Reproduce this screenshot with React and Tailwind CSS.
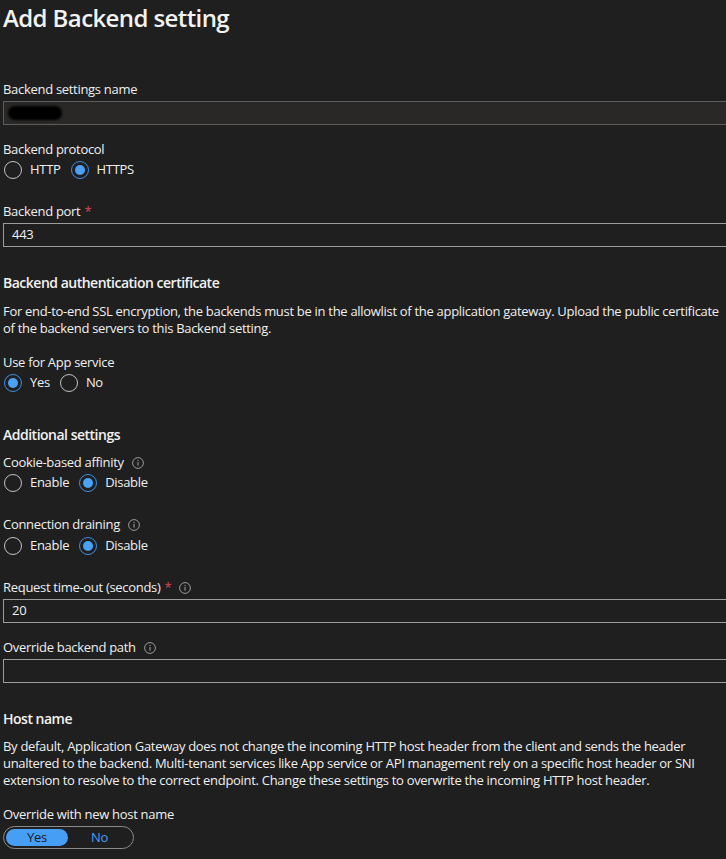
import React from "react";

const font = { fontFamily: '"Segoe UI", "Open Sans", "Noto Sans", sans-serif' };

function Info() {
  return (
    <svg width="12" height="12" viewBox="0 0 12 12" className="ml-[8px] shrink-0">
      <circle cx="6" cy="6" r="5.4" fill="none" stroke="#9a9a9a" strokeWidth="1" />
      <circle cx="6" cy="3.6" r="0.7" fill="#9a9a9a" />
      <rect x="5.45" y="5" width="1.1" height="3.6" fill="#9a9a9a" />
    </svg>
  );
}

function Label({ children, required, info, className = "" }) {
  return (
    <div className={`flex items-center h-[20px] pt-[2px] text-[13px] tracking-[-0.3px] text-[#f0f0f0] ${className}`}>
      <span>{children}</span>
      {required && <span className="ml-[4px] text-[#e0425a]">*</span>}
      {info && <Info />}
    </div>
  );
}

function Radio({ checked, label }) {
  return (
    <div className="flex items-center h-[20px]">
      <span
        className={`flex items-center justify-center w-[18px] h-[18px] rounded-full border ${
          checked ? "border-[#3f8fe0]" : "border-[#c2c2c2]"
        }`}
      >
        {checked && <span className="w-[10px] h-[10px] rounded-full bg-[#4aa2f5]" />}
      </span>
      <span className="ml-[8px] text-[13px] tracking-[-0.3px] text-[#f0f0f0]">{label}</span>
    </div>
  );
}

function RadioRow({ items, className = "" }) {
  return (
    <div className={`flex items-center gap-[10px] pl-[1px] ${className}`}>
      {items.map((it) => (
        <Radio key={it.label} {...it} />
      ))}
    </div>
  );
}

function Input({ value, dim, className = "", children }) {
  return (
    <div
      className={`relative h-[24px] w-[760px] border flex items-center pl-[8px] text-[13px] tracking-[-0.3px] text-[#f0f0f0] ${
        dim ? "border-[#5c5c5c] bg-[#292826]" : "border-[#9c9c9c] bg-[#1f1f1f]"
      } ${className}`}
    >
      {value}
      {children}
    </div>
  );
}

function Heading({ children, className = "" }) {
  return (
    <div className={`h-[20px] flex items-center text-[14px] font-semibold tracking-[-0.5px] text-[#f2f2f2] ${className}`}>
      {children}
    </div>
  );
}

export default function App() {
  return (
    <div className="w-full min-h-[859px] bg-[#1f1f1f] overflow-hidden pl-[3px] text-[#f0f0f0]" style={font}>
      <h1 className="text-[24px] font-semibold leading-[36px] h-[36px] tracking-[-0.6px] text-[#f2f2f2]">Add Backend setting</h1>

      <Label className="mt-[43px]">Backend settings name</Label>
      <Input dim className="mt-[2px]">
        <span className="absolute left-[4px] top-[4px] w-[54px] h-[14px] rounded-full bg-black blur-[1px]" />
      </Input>

      <Label className="mt-[14px]">Backend protocol</Label>
      <RadioRow
        className="mt-[1px]"
        items={[
          { label: "HTTP", checked: false },
          { label: "HTTPS", checked: true },
        ]}
      />

      <Label required className="mt-[21px]">Backend port</Label>
      <Input value="443" className="mt-[2px]" />

      <Heading className="mt-[25px]">Backend authentication certificate</Heading>
      <p className="mt-[11px] text-[13px] tracking-[-0.3px] leading-[16.5px] w-[760px] whitespace-nowrap">
        For end-to-end SSL encryption, the backends must be in the allowlist of the application gateway. Upload the public certificate
        <br />
        of the backend servers to this Backend setting.
      </p>

      <Label className="mt-[16px]">Use for App service</Label>
      <RadioRow
        className="mt-[1px]"
        items={[
          { label: "Yes", checked: true },
          { label: "No", checked: false },
        ]}
      />

      <Heading className="mt-[31px]">Additional settings</Heading>
      <Label info className="mt-[8px]">Cookie-based affinity</Label>
      <RadioRow
        className="mt-[1px]"
        items={[
          { label: "Enable", checked: false },
          { label: "Disable", checked: true },
        ]}
      />

      <Label info className="mt-[21px]">Connection draining</Label>
      <RadioRow
        className="mt-[2px]"
        items={[
          { label: "Enable", checked: false },
          { label: "Disable", checked: true },
        ]}
      />

      <Label required info className="mt-[21px]">Request time-out (seconds)</Label>
      <Input value="20" className="mt-[2px]" />

      <Label info className="mt-[14px]">Override backend path</Label>
      <Input className="mt-[2px]" />

      <Heading className="mt-[25px]">Host name</Heading>
      <p className="mt-[10px] text-[13px] tracking-[-0.3px] leading-[17px] whitespace-nowrap">
        By default, Application Gateway does not change the incoming HTTP host header from the client and sends the header
        <br />
        unaltered to the backend. Multi-tenant services like App service or API management rely on a specific host header or SNI
        <br />
        extension to resolve to the correct endpoint. Change these settings to overwrite the incoming HTTP host header.
      </p>

      <Label className="mt-[15px]">Override with new host name</Label>
      <div className="mt-[2px] w-[131px] h-[23px] rounded-full border border-[#8a8a8a] flex items-center p-[2px]">
        <div className="w-[62px] h-[17px] rounded-full bg-[#479ef5] flex items-center justify-center text-[13px] tracking-[-0.3px] text-[#1b1b1b]">
          Yes
        </div>
        <div className="flex-1 flex items-center justify-center text-[13px] tracking-[-0.3px] text-[#479ef5]">No</div>
      </div>
    </div>
  );
}
